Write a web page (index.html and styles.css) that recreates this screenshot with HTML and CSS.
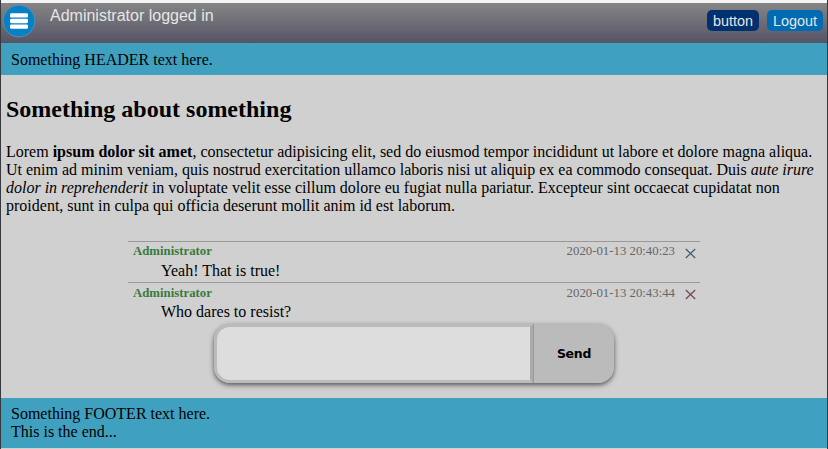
FILE: index.html
```html
<!DOCTYPE html>
<html lang="en">
<head>
<meta charset="utf-8">
<title>Something about something</title>
<link rel="stylesheet" href="styles.css">
</head>
<body>
<div class="page">
  <nav class="topbar">
    <svg class="menu" width="34" height="34" viewBox="0 0 34 34">
      <circle cx="17" cy="17" r="16" fill="#0a80c4" stroke="#5a8fb0" stroke-width="1"/>
      <g fill="#fff"><rect x="8" y="9.2" width="18" height="4.4" rx="1.4"/><rect x="8" y="14.8" width="18" height="4.4" rx="1.4"/><rect x="8" y="20.4" width="18" height="4.4" rx="1.4"/></g>
    </svg>
    <span class="status">Administrator logged in</span>
    <a class="btn dark">button</a>
    <a class="btn">Logout</a>
  </nav>
  <header class="band">Something HEADER text here.</header>
  <main>
    <h2>Something about something</h2>
    <p><span class="line">Lorem <b>ipsum dolor sit amet</b>, consectetur adipisicing elit, sed do eiusmod tempor incididunt ut labore et dolore magna aliqua.</span>
    <span class="line">Ut enim ad minim veniam, quis nostrud exercitation ullamco laboris nisi ut aliquip ex ea commodo consequat. Duis <i>aute irure</i></span>
    <span class="line"><i>dolor in reprehenderit</i> in voluptate velit esse cillum dolore eu fugiat nulla pariatur. Excepteur sint occaecat cupidatat non</span>
    <span class="line">proident, sunt in culpa qui officia deserunt mollit anim id est laborum.</span></p>
    <section class="comments">
      <article>
        <div class="meta"><b>Administrator</b><time>2020-01-13 20:40:23</time><svg class="close blue" width="11" height="11" viewBox="0 0 11 11"><path d="M.8 1L10.2 10M10.2 1L.8 10"/></svg></div>
        <div class="text">Yeah! That is true!</div>
      </article>
      <article>
        <div class="meta"><b>Administrator</b><time>2020-01-13 20:43:44</time><svg class="close red" width="11" height="11" viewBox="0 0 11 11"><path d="M.8 1L10.2 10M10.2 1L.8 10"/></svg></div>
        <div class="text">Who dares to resist?</div>
      </article>
    </section>
    <form class="composer"><div class="input"></div><div class="send">Send</div></form>
  </main>
  <footer class="band">Something FOOTER text here.<br>This is the end...</footer>
</div>
</body>
</html>
```
FILE: styles.css
```css
* { box-sizing: border-box; }
body {
  margin: 0;
  background: #d0d0d0;
  font: 16px/18px "Liberation Serif", serif;
  color: #000;
  overflow: hidden;
}
.page {
  height: 449px;
  border: solid #35383c;
  border-width: 0 1px;
}
.topbar {
  height: 43px;
  border-top: 3px solid #f4f4f4;
  background: linear-gradient(#858585, #555466);
  display: flex;
  align-items: flex-start;
  font: 16px/18px "Liberation Sans", sans-serif;
  color: #e6e6e6;
  padding-right: 4px;
}
.menu { margin: 1px 0 0 1px; flex: none; }
.status { margin: 4px auto 0 14px; }
.btn {
  width: 56px;
  height: 21px;
  margin: 7px 0 0 8px;
  padding: 2px 0;
  border-radius: 5px;
  background: #006bb2;
  font-size: 14.4px;
  text-align: center;
}
.btn.dark { width: 52px; background: #003070; }
.band {
  background: #40a0c0;
  height: 32px;
  padding: 8px 10px 6px;
}
footer.band { height: 50px; padding-top: 7px; }
main {
  height: 323px;
  padding: 20px 5px 0;
}
h2 { margin: 0; font-size: 24px; line-height: 28px; }
p { margin: 20px 0 0; }
.line { display: block; white-space: nowrap; }
.comments { width: 572px; margin: 26px 0 0 122px; }
article { height: 41px; border-top: 1px solid #999; padding: 0 3px 0 5px; }
article + article { height: 42px; }
.meta { display: flex; height: 19px; font-size: 12.8px; line-height: 19px; color: #666; }
article + article .meta { line-height: 20px; }
.meta b { color: #3a7a3a; margin-right: auto; }
.close { margin: 6px 1px 0 10px; stroke-width: 1.2; fill: none; }
.close.blue { stroke: #3d5870; }
.close.red { stroke: #704850; }
.text { padding-left: 28px; line-height: 20px; }
.composer {
  width: 400px;
  height: 59px;
  margin: 0 0 0 208px;
  display: flex;
  border-radius: 16px;
  background: #bbb;
  box-shadow: 0 2px 5px #555;
}
.input {
  width: 319px;
  border: 3px solid #bbb;
  border-right: 3px solid #aaa;
  border-radius: 16px 0 0 16px;
  background: #ddd;
}
.send {
  flex: 1;
  border-left: 1px solid #999;
  border-radius: 0 16px 16px 0;
  background: #bbb;
  font: bold 12.5px/59px "DejaVu Sans", sans-serif;
  letter-spacing: -0.3px;
  text-align: center;
}
```
